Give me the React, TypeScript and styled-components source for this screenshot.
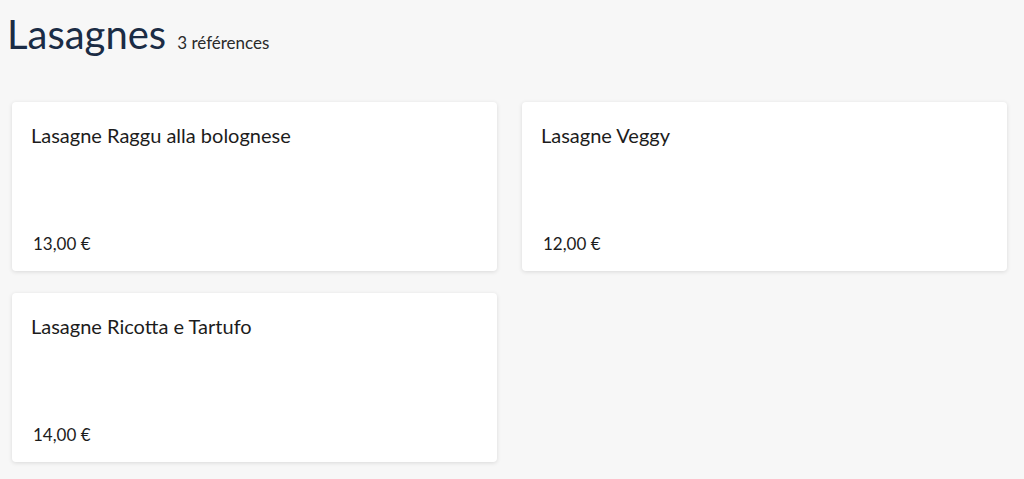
import React from "react";
import styled, { createGlobalStyle } from "styled-components";

const GlobalStyle = createGlobalStyle`
  html, body {
    margin: 0;
    padding: 0;
    background: #f7f7f7;
    font-family: Lato, "Open Sans", sans-serif;
    color: #1c1c1c;
  }
`;

const Page = styled.div`
  padding: 10px 17px 16px 12px;
`;

const Header = styled.div`
  display: flex;
  align-items: baseline;
  gap: 11px;
  margin-left: -5px;
  margin-bottom: 44px;
`;

const Title = styled.h1`
  margin: 0;
  font-size: 40px;
  font-weight: 400;
  line-height: 48px;
  color: #1b2c45;
`;

const Count = styled.span`
  font-size: 17px;
  color: #2a2a2a;
`;

const Grid = styled.div`
  display: grid;
  grid-template-columns: 1fr 1fr;
  column-gap: 25px;
  row-gap: 22px;
`;

const Card = styled.div`
  height: 169px;
  box-sizing: border-box;
  padding: 20px 19px 16px 19px;
  background: #fff;
  border-radius: 4px;
  box-shadow: 0 1px 4px rgba(0, 0, 0, 0.12);
  display: flex;
  flex-direction: column;
  justify-content: space-between;
`;

const Name = styled.div`
  font-size: 20px;
  line-height: 26px;
  color: #1c1c1c;
`;

const Price = styled.div`
  font-size: 17px;
  line-height: 22px;
  padding-left: 2px;
  color: #1c1c1c;
`;

const items = [
  { name: "Lasagne Raggu alla bolognese", price: "13,00 €" },
  { name: "Lasagne Veggy", price: "12,00 €" },
  { name: "Lasagne Ricotta e Tartufo", price: "14,00 €" },
];

export default function App() {
  return (
    <>
      <GlobalStyle />
      <Page>
        <Header>
          <Title>Lasagnes</Title>
          <Count>3 références</Count>
        </Header>
        <Grid>
          {items.map((item) => (
            <Card key={item.name}>
              <Name>{item.name}</Name>
              <Price>{item.price}</Price>
            </Card>
          ))}
        </Grid>
      </Page>
    </>
  );
}
